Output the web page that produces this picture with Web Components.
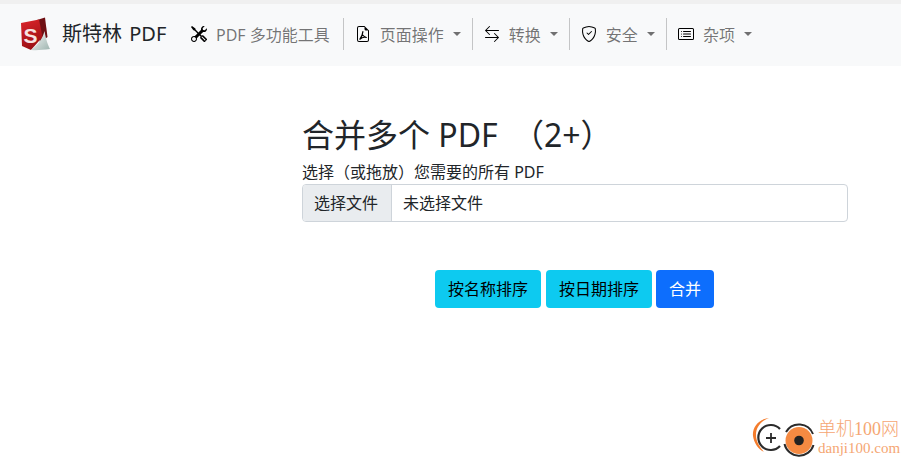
<!DOCTYPE html>
<html lang="zh">
<head>
<meta charset="utf-8">
<title>斯特林 PDF</title>
<style>
  html, body { margin: 0; padding: 0; background: #fff; }
  body { font-family: "Noto Sans", "Noto Sans CJK SC", sans-serif; color: #212529; height: 459px; overflow: hidden; position: relative; }
</style>
</head>
<body>
<app-navbar>
  <nav-item label="PDF 多功能工具" plain icon="tools"></nav-item>
  <nav-item label="页面操作" icon="pdf"></nav-item>
  <nav-item label="转换" icon="arrows"></nav-item>
  <nav-item label="安全" icon="shield"></nav-item>
  <nav-item label="杂项" icon="list" last></nav-item>
</app-navbar>
<merge-form>
  <file-picker></file-picker>
  <form-button slot="actions" kind="info">按名称排序</form-button>
  <form-button slot="actions" kind="info">按日期排序</form-button>
  <form-button slot="actions" kind="primary">合并</form-button>
</merge-form>
<site-watermark></site-watermark>

<script>
// svg for each nav icon, all in a 16 box like the bootstrap icon set
const ICONS = {
  tools: `<path fill="currentColor" d="M1 0 0 1l2.2 3.081a1 1 0 0 0 .815.419h.07a1 1 0 0 1 .708.293l2.675 2.675-2.617 2.654A3.003 3.003 0 0 0 0 13a3 3 0 1 0 5.878-.851l2.654-2.617.968.968-.305.914a1 1 0 0 0 .242 1.023l3.27 3.27a.997.997 0 0 0 1.414 0l1.586-1.586a.997.997 0 0 0 0-1.414l-3.27-3.27a1 1 0 0 0-1.023-.242L10.5 9.5l-.96-.96 2.68-2.643A3.005 3.005 0 0 0 16 3c0-.269-.035-.53-.102-.777l-2.14 2.141L12 4l-.364-1.757L13.777.102a3 3 0 0 0-3.675 3.68L7.462 6.46 4.793 3.793a1 1 0 0 1-.293-.707v-.071a1 1 0 0 0-.419-.814L1 0Zm9.646 10.646a.5.5 0 0 1 .708 0l2.914 2.915a.5.5 0 0 1-.707.707l-2.915-2.914a.5.5 0 0 1 0-.708ZM3 11l.471.242.529.026.287.445.445.287.026.529L5 13l-.242.471-.026.529-.445.287-.287.445-.529.026L3 15l-.471-.242L2 14.732l-.287-.445L1.268 14l-.026-.529L1 13l.242-.471.026-.529.445-.287.287-.445.529-.026L3 11Z"/>`,
  pdf: `<path fill="currentColor" d="M14 14V4.500L9.500 0H4a2 2 0 0 0-2 2v12a2 2 0 0 0 2 2h8a2 2 0 0 0 2-2zM9.500 3A1.500 1.500 0 0 0 11 4.500h2V14a1 1 0 0 1-1 1H4a1 1 0 0 1-1-1V2a1 1 0 0 1 1-1h5.500v2z"/>
    <path d="M7.900 5.600 C7.700 8 6.800 10.600 4.900 13.200 M7.700 9 C8.500 10.200 9.800 11 11.300 11.500 M11.300 11.500 C9.500 11 7 11.300 4.900 13.200" fill="none" stroke="currentColor" stroke-width="1.200" stroke-linecap="round"/>`,
  arrows: `<path fill="currentColor" fill-rule="evenodd" d="M1 11.500a.5.500 0 0 0 .5.500h11.793l-3.147 3.146a.5.500 0 0 0 .708.708l4-4a.5.500 0 0 0 0-.708l-4-4a.5.500 0 0 0-.708.708L13.293 11H1.500a.5.500 0 0 0-.5.500zm14-7a.5.500 0 0 1-.5.500H2.707l3.147 3.146a.5.500 0 1 1-.708.708l-4-4a.5.500 0 0 1 0-.708l4-4a.5.500 0 1 1 .708.708L2.707 4H14.500a.5.500 0 0 1 .5.500z"/>`,
  shield: `<path fill="currentColor" d="M5.338 1.590a61.440 61.440 0 0 0-2.837.856.481.481 0 0 0-.328.390c-.554 4.157.726 7.190 2.253 9.188a10.725 10.725 0 0 0 2.287 2.233c.346.244.652.420.893.533.120.057.218.095.293.118a.550.550 0 0 0 .101.025.615.615 0 0 0 .100-.025c.076-.023.174-.061.294-.118.240-.113.547-.290.893-.533a10.726 10.726 0 0 0 2.287-2.233c1.527-1.997 2.807-5.031 2.253-9.188a.480.480 0 0 0-.328-.390c-.651-.213-1.750-.560-2.837-.855C9.552 1.290 8.531 1.067 8 1.067c-.530 0-1.552.223-2.662.524zM5.072.560C6.157.265 7.310 0 8 0s1.843.265 2.928.560c1.110.3 2.229.655 2.887.870a1.540 1.540 0 0 1 1.044 1.262c.596 4.477-.787 7.795-2.465 9.990a11.775 11.775 0 0 1-2.517 2.453 7.159 7.159 0 0 1-1.048.625c-.280.132-.581.240-.829.240s-.548-.108-.829-.240a7.158 7.158 0 0 1-1.048-.625 11.777 11.777 0 0 1-2.517-2.453C1.928 10.487.545 7.169 1.141 2.692A1.540 1.540 0 0 1 2.185 1.430 62.456 62.456 0 0 1 5.072.560z"/>
    <path fill="currentColor" d="M10.854 5.146a.5.500 0 0 1 0 .708l-3 3a.5.500 0 0 1-.708 0l-1.500-1.500a.5.500 0 1 1 .708-.708L7.500 7.793l2.646-2.647a.5.500 0 0 1 .708 0z"/>`,
  list: `<path fill="currentColor" d="M14.500 3a.5.500 0 0 1 .5.500v9a.5.500 0 0 1-.5.500h-13a.5.500 0 0 1-.5-.5v-9a.5.500 0 0 1 .5-.5h13zm-13-1A1.500 1.500 0 0 0 0 3.500v9A1.500 1.500 0 0 0 1.500 14h13a1.500 1.500 0 0 0 1.500-1.500v-9A1.500 1.500 0 0 0 14.500 2h-13z"/>
    <path fill="currentColor" d="M5 8a.5.500 0 0 1 .5-.5h7a.5.500 0 0 1 0 1h-7A.5.500 0 0 1 5 8zm0-2.500a.5.500 0 0 1 .5-.5h7a.5.500 0 0 1 0 1h-7a.5.500 0 0 1-.5-.5zm0 5a.5.500 0 0 1 .5-.5h7a.5.500 0 0 1 0 1h-7a.5.500 0 0 1-.5-.5zm-1-5a.5.500 0 1 1-1 0 .5.500 0 0 1 1 0zM4 8a.5.500 0 1 1-1 0 .5.500 0 0 1 1 0zm0 2.500a.5.500 0 1 1-1 0 .5.500 0 0 1 1 0z"/>`
};

class AppNavbar extends HTMLElement {
  constructor() {
    super();
    this.attachShadow({ mode: "open" });
    this.shadowRoot.innerHTML = `
      <style>
        :host { display: block; border-top: 4px solid #f0f0f0; background: #f8f9fa; box-sizing: border-box; height: 66px; }
        nav { display: flex; align-items: center; height: 62px; padding-left: 18px; }
        .brand { display: flex; align-items: center; gap: 10px; width: 162px; flex: none; font-size: 20px; word-spacing: 2px; color: #212529; margin-top: -3px; white-space: nowrap; }
        .brand span { margin-top: -2px; }
        svg { display: block; flex: none; }
        .items { display: flex; align-items: center; height: 100%; }
      </style>
      <nav>
        <div class="brand">
          <svg width="34" height="34" viewBox="0 0 34 34">
            <defs>
              <linearGradient id="red" x1="0" y1="0" x2="0.3" y2="1"><stop offset="0" stop-color="#dc242a"/><stop offset="1" stop-color="#9c1015"/></linearGradient>
              <linearGradient id="page" x1="0" y1="0" x2="1" y2="1"><stop offset="0" stop-color="#ffffff"/><stop offset="1" stop-color="#9db3ae"/></linearGradient>
            </defs>
            <path d="M19 3 L27 .5 L29.500 20 L22 26 Z" fill="#6f0f13"/>
            <path d="M3 6 L21 2.500 L24.500 20 L13 33 L4 29 Z" fill="url(#red)"/>
            <path d="M13 33 C20 28 25 21 26.500 14 C28 23 30 28 32 32 C25 33 18 33.500 13 33 Z" fill="url(#page)"/>
            <text x="5.500" y="26" font-family="Liberation Sans" font-weight="700" font-size="21" fill="#f6e3e3">S</text>
          </svg>
          <span>斯特林 PDF</span>
        </div>
        <div class="items"><slot></slot></div>
      </nav>`;
  }
}

class NavItem extends HTMLElement {
  constructor() {
    super();
    this.attachShadow({ mode: "open" });
  }
  connectedCallback() {
    const icon = ICONS[this.getAttribute("icon")] || "";
    const caret = this.hasAttribute("plain") ? "" : `<i class="caret"></i>`;
    const rule = this.hasAttribute("last") ? "" : `<b class="rule"></b>`;
    this.shadowRoot.innerHTML = `
      <style>
        :host { display: flex; align-items: center; height: 32px; margin-top: -2px; }
        :host([plain]) a { padding-right: 13px; }
        a { display: flex; align-items: center; color: rgba(0,0,0,.55); font-size: 16px; padding: 0 11px; white-space: nowrap; height: 100%; }
        svg { color: #000; margin-right: 9px; flex: none; }
        .caret { display: block; margin-left: 9px; width: 0; height: 0; border: 4.8px solid transparent; border-top-color: rgba(0,0,0,.55); border-bottom: 0; }
        .rule { display: block; width: 1px; height: 32px; background: #c4c5c6; }
      </style>
      <a><svg width="16" height="16" viewBox="0 0 16 16">${icon}</svg><span>${this.getAttribute("label")}</span>${caret}</a>${rule}`;
  }
}

class MergeForm extends HTMLElement {
  constructor() {
    super();
    this.attachShadow({ mode: "open" });
    this.shadowRoot.innerHTML = `
      <style>
        :host { display: block; width: 546px; margin: 45px 0 0 302px; }
        h2 { margin: 0; font-size: 32px; font-weight: 400; line-height: 48px; color: #212529; white-space: pre; }
        /* the fullwidth parens sit tighter here than in the reference font */
        h2 .open { margin-left: 6px; }
        label { display: block; font-size: 16px; line-height: 24px; margin-top: 1px; height: 24px; white-space: pre; }
        .actions { display: flex; gap: 5px; margin: 48px 0 0 133px; }
      </style>
      <h2>合并多个 PDF <span class="open">（</span>2+）</h2>
      <label>选择（或拖放）您需要的所有 PDF</label>
      <slot></slot>
      <div class="actions"><slot name="actions"></slot></div>`;
  }
}

class FilePicker extends HTMLElement {
  constructor() {
    super();
    this.attachShadow({ mode: "open" });
    this.shadowRoot.innerHTML = `
      <style>
        :host { display: flex; height: 38px; box-sizing: border-box; border: 1px solid #ced4da; border-radius: 4px; font-size: 16px; color: #212529; overflow: hidden; background: #fff; }
        .btn { display: flex; align-items: center; padding: 0 13px 2px 11px; background: #e9ecef; border-right: 1px solid #ced4da; }
        .name { display: flex; align-items: center; padding: 0 11px 2px; }
      </style>
      <div class="btn">选择文件</div>
      <div class="name">未选择文件</div>`;
  }
}

class FormButton extends HTMLElement {
  constructor() {
    super();
    this.attachShadow({ mode: "open" });
    this.shadowRoot.innerHTML = `
      <style>
        :host { display: flex; align-items: center; height: 38px; box-sizing: border-box; padding: 0 13px 2px; border-radius: 4px; font-size: 16px; background: #0dcaf0; color: #000; }
        :host([kind="primary"]) { background: #0d6efd; color: #fff; margin-left: -1px; }
      </style>
      <slot></slot>`;
  }
}

class SiteWatermark extends HTMLElement {
  constructor() {
    super();
    this.attachShadow({ mode: "open" });
    this.shadowRoot.innerHTML = `
      <style>
        :host { position: absolute; left: 752px; top: 415px; width: 149px; height: 44px; display: flex; gap: 2px; color: #f5a673; }
        svg { flex: none; }
        .txt { display: flex; flex-direction: column; padding-top: 2px; white-space: nowrap; font-family: "Liberation Serif", "Noto Sans CJK SC", serif; }
        .a { font-size: 18px; line-height: 24px; height: 24px; font-weight: 300; }
        .b { font-size: 15px; line-height: 16px; margin-top: -1px; }
      </style>
      <svg width="64" height="44" viewBox="0 0 64 44">
        <path d="M17 3 C7 4 0 12 1 21 C2 28 6 34 12 37 C7 31 4 26 4 20 C4 12 9 6 17 3 Z" fill="#f47c2c"/>
        <path d="M28 14 A12.500 12.500 0 1 0 28 31" fill="none" stroke="#2b2b2b" stroke-width="2.200"/>
        <path d="M14 23 H24 M19 18 V28" stroke="#2b2b2b" stroke-width="1.800"/>
        <circle cx="47" cy="25.500" r="13.500" fill="#f58a42"/>
        <path d="M34 17 A15 15 0 0 1 61 19 M32.500 29 A15 15 0 0 0 61.500 30" fill="none" stroke="#2b2b2b" stroke-width="2"/>
        <circle cx="47" cy="25.500" r="4.800" fill="#222"/>
      </svg>
      <div class="txt"><span class="a">单机100网</span><span class="b">danji100.com</span></div>`;
  }
}

customElements.define("app-navbar", AppNavbar);
customElements.define("nav-item", NavItem);
customElements.define("merge-form", MergeForm);
customElements.define("file-picker", FilePicker);
customElements.define("form-button", FormButton);
customElements.define("site-watermark", SiteWatermark);
</script>
</body>
</html>
